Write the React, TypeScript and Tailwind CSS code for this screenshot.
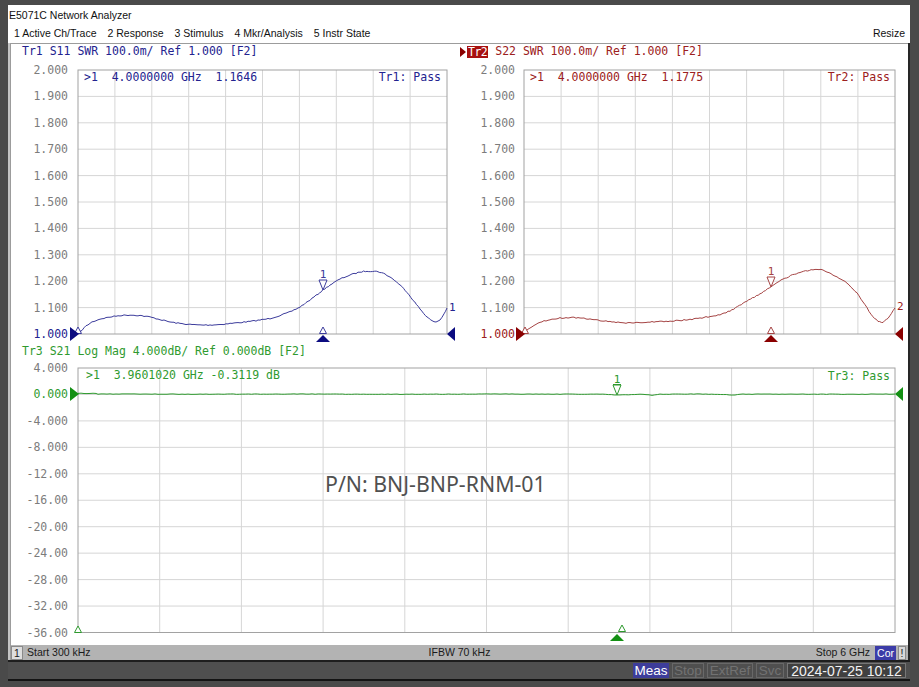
import React from "react";

type P = [number, number];

function trace(pts: P[], step: number, amp: number, seed: number): string {
  let s = seed;
  const rnd = () => {
    s = (s * 16807) % 2147483647;
    return s / 2147483647 - 0.5;
  };
  const out: string[] = [];
  for (let i = 0; i < pts.length - 1; i++) {
    const [x0, y0] = pts[i];
    const [x1, y1] = pts[i + 1];
    const n = Math.max(1, Math.round((x1 - x0) / step));
    for (let k = 0; k < n; k++) {
      const t = k / n;
      const x = x0 + (x1 - x0) * t;
      const y = y0 + (y1 - y0) * t + (i === 0 && k === 0 ? 0 : rnd() * amp);
      out.push(`${x.toFixed(1)},${y.toFixed(2)}`);
    }
  }
  const l = pts[pts.length - 1];
  out.push(`${l[0]},${l[1]}`);
  return out.join(" ");
}

const MONO = "DejaVu Sans Mono, monospace";
const GRAY = "#7c7c7c";

const tr1: P[] = [
  [78, 334], [82, 330], [86, 326], [92, 322], [100, 319], [110, 317], [120, 315.5], [130, 315], [140, 315.5],
  [150, 317], [160, 319.5], [170, 322], [180, 323.5], [190, 324.5], [200, 325], [210, 325], [220, 324.5],
  [230, 323.5], [240, 322.5], [250, 321.5], [260, 320], [270, 318.5], [280, 315.5], [290, 312], [300, 307],
  [310, 300], [318, 294], [323, 290], [330, 285], [340, 279], [350, 275], [360, 272], [367, 271], [378, 271.5],
  [385, 274], [393, 279], [400, 285], [407, 292], [413, 300], [420, 309], [427, 317], [432, 321], [436, 322],
  [440, 320], [444, 314], [447, 308],
];

const tr2: P[] = [
  [524, 334], [528, 329], [534, 325], [540, 322], [550, 319.5], [560, 318], [570, 317.5], [580, 318], [590, 319],
  [600, 320.5], [610, 321.5], [620, 322.5], [630, 323], [640, 322.5], [650, 322], [660, 321.5], [670, 321],
  [680, 320.5], [690, 319.5], [700, 318], [710, 316.5], [720, 314.5], [730, 311], [745, 302], [760, 294],
  [771, 287], [783, 279], [800, 272], [813, 269.5], [823, 270], [833, 275], [847, 283], [857, 293], [867, 308],
  [873, 317], [878, 321], [883, 322.5], [888, 318], [895, 308],
];

const tr3: P[] = [
  [78, 393.4], [96, 393.4], [98, 394], [200, 394.2], [300, 394], [400, 394.3], [500, 394], [560, 394.2],
  [600, 394], [617, 395], [640, 394.3], [652, 395.2], [660, 394.2], [700, 394], [735, 395], [740, 394.2],
  [800, 394.1], [850, 394.3], [895, 394],
];

function Grid({ x0, x1, y0, y1, nx, ny }: { x0: number; x1: number; y0: number; y1: number; nx: number; ny: number }) {
  const lines: React.ReactNode[] = [];
  for (let i = 1; i < nx; i++) {
    const x = x0 + ((x1 - x0) * i) / nx;
    lines.push(<line key={"v" + i} x1={x} x2={x} y1={y0} y2={y1} stroke="#d6d6d6" strokeWidth={1} />);
  }
  for (let i = 1; i < ny; i++) {
    const y = y0 + ((y1 - y0) * i) / ny;
    lines.push(<line key={"h" + i} x1={x0} x2={x1} y1={y} y2={y} stroke="#d6d6d6" strokeWidth={1} />);
  }
  return (
    <g>
      {lines}
      <rect x={x0} y={y0} width={x1 - x0} height={y1 - y0} fill="none" stroke="#a2a2a2" strokeWidth={1} />
    </g>
  );
}

function Labels({ x, y0, y1, labels, refIdx, refColor }: { x: number; y0: number; y1: number; labels: string[]; refIdx: number; refColor: string }) {
  const n = labels.length - 1;
  return (
    <g fontFamily={MONO} fontSize={11.5}>
      {labels.map((l, i) => (
        <text
          key={l}
          x={x}
          y={y0 + ((y1 - y0) * i) / n + 4}
          textAnchor="end"
          fill={i === refIdx ? refColor : GRAY}
        >
          {l}
        </text>
      ))}
    </g>
  );
}

function TriRight({ x, y, c }: { x: number; y: number; c: string }) {
  return <polygon points={`${x - 8},${y - 7} ${x + 1},${y} ${x - 8},${y + 7}`} fill={c} />;
}
function TriLeft({ x, y, c }: { x: number; y: number; c: string }) {
  return <polygon points={`${x + 8},${y - 7} ${x},${y} ${x + 8},${y + 7}`} fill={c} />;
}
function TriUpFill({ x, y, c }: { x: number; y: number; c: string }) {
  return <polygon points={`${x - 7},${y + 7} ${x},${y} ${x + 7},${y + 7}`} fill={c} />;
}
function TriUpHollow({ x, y, c }: { x: number; y: number; c: string }) {
  return <polygon points={`${x - 3.5},${y + 6.5} ${x},${y} ${x + 3.5},${y + 6.5}`} fill="white" stroke={c} strokeWidth={1} />;
}
function Marker({ x, y, c }: { x: number; y: number; c: string }) {
  return (
    <g>
      <polygon points={`${x - 4},${y - 10} ${x + 4},${y - 10} ${x},${y}`} fill="white" fillOpacity={0.6} stroke={c} strokeWidth={1} />
      <text x={x} y={y - 12} textAnchor="middle" fontFamily={MONO} fontSize={11} fill={c}>
        1
      </text>
    </g>
  );
}

const NB = "\u00a0";

function Tr1Chart() {
  const c = "#23238f";
  const t = "#3c3c9c";
  const d = "#0c0c80";
  const labels = ["2.000", "1.900", "1.800", "1.700", "1.600", "1.500", "1.400", "1.300", "1.200", "1.100", "1.000"];
  return (
    <svg width={447} height={283} viewBox="11 60 447 283" className="block">
      <Labels x={68} y0={70} y1={334} labels={labels} refIdx={10} refColor={c} />
      <Grid x0={78} x1={447} y0={70} y1={334} nx={10} ny={10} />
      <text x={84} y={81} fontFamily={MONO} fontSize={11.5} fill={c}>
        {`>1${NB}${NB}4.0000000${NB}GHz${NB}${NB}1.1646`}
      </text>
      <text x={441} y={81} textAnchor="end" fontFamily={MONO} fontSize={11.5} fill={c}>
        Tr1:{NB}Pass
      </text>
      <polyline points={trace(tr1, 2, 1.1, 7)} fill="none" stroke={t} strokeWidth={1} />
      <Marker x={323} y={290} c={t} />
      <text x={449} y={311} fontFamily={MONO} fontSize={11} fill={c}>
        1
      </text>
      <TriUpHollow x={78} y={327} c={t} />
      <TriUpHollow x={323} y={327} c={t} />
      <TriRight x={78} y={334} c={d} />
      <TriLeft x={447} y={334} c={d} />
      <TriUpFill x={323} y={335} c={d} />
    </svg>
  );
}

function Tr2Chart() {
  const c = "#9c2020";
  const t = "#a54444";
  const d = "#8a0000";
  const labels = ["2.000", "1.900", "1.800", "1.700", "1.600", "1.500", "1.400", "1.300", "1.200", "1.100", "1.000"];
  return (
    <svg width={450} height={283} viewBox="458 60 450 283" className="block">
      <Labels x={515} y0={70} y1={334} labels={labels} refIdx={10} refColor={c} />
      <Grid x0={524} x1={895} y0={70} y1={334} nx={10} ny={10} />
      <text x={530} y={81} fontFamily={MONO} fontSize={11.5} fill={c}>
        {`>1${NB}${NB}4.0000000${NB}GHz${NB}${NB}1.1775`}
      </text>
      <text x={890} y={81} textAnchor="end" fontFamily={MONO} fontSize={11.5} fill={c}>
        Tr2:{NB}Pass
      </text>
      <polyline points={trace(tr2, 2, 1.1, 13)} fill="none" stroke={t} strokeWidth={1} />
      <Marker x={771} y={287} c={t} />
      <text x={897} y={310} fontFamily={MONO} fontSize={11} fill={c}>
        2
      </text>
      <TriUpHollow x={525} y={327} c={t} />
      <TriUpHollow x={771} y={327} c={t} />
      <TriRight x={524} y={334} c={d} />
      <TriLeft x={895} y={334} c={d} />
      <TriUpFill x={771} y={335} c={d} />
    </svg>
  );
}

function Tr3Chart() {
  const c = "#2f9a2f";
  const t = "#2e9a2e";
  const d = "#149014";
  const labels = ["4.000", "0.000", "-4.000", "-8.000", "-12.00", "-16.00", "-20.00", "-24.00", "-28.00", "-32.00", "-36.00"];
  return (
    <svg width={897} height={285} viewBox="11 360 897 285" className="block">
      <Labels x={68} y0={368} y1={632.5} labels={labels} refIdx={1} refColor={c} />
      <Grid x0={78} x1={895} y0={368} y1={632.5} nx={10} ny={10} />
      <text x={86} y={379} fontFamily={MONO} fontSize={11.5} fill={c}>
        {`>1${NB}${NB}3.9601020${NB}GHz${NB}-0.3119${NB}dB`}
      </text>
      <text x={890} y={380} textAnchor="end" fontFamily={MONO} fontSize={11.5} fill={c}>
        Tr3:{NB}Pass
      </text>
      <text x={325} y={492} fontFamily="Noto Sans, Open Sans, sans-serif" fontSize={21.3} fill="#505050">
        P/N: BNJ-BNP-RNM-01
      </text>
      <polyline points={trace(tr3, 3, 0.45, 21)} fill="none" stroke={t} strokeWidth={1} />
      <Marker x={617} y={395} c={t} />
      <line x1={613} x2={621} y1={384.5} y2={384.5} stroke={t} strokeWidth={1} />
      <TriUpHollow x={78} y={626} c={t} />
      <TriUpHollow x={622} y={625} c={t} />
      <TriRight x={78} y={394} c={d} />
      <TriLeft x={895} y={394} c={d} />
      <TriUpFill x={617} y={634} c={d} />
    </svg>
  );
}

export default function App() {
  return (
    <div className="w-[919px] h-[687px] bg-[#4a4a4a] flex flex-col pt-[5px] pl-[8px] pr-[9px] overflow-hidden font-['Liberation_Sans',sans-serif]">
      {/* window title + menu */}
      <div className="bg-white h-[38px] flex flex-col text-[10.5px] text-[#111]">
        <div className="h-[19px] flex items-center pl-[1px] pt-[3px]">E5071C Network Analyzer</div>
        <div className="h-[19px] flex items-center pl-[6px] gap-[11px]">
          <span>1 Active Ch/Trace</span>
          <span>2 Response</span>
          <span>3 Stimulus</span>
          <span>4 Mkr/Analysis</span>
          <span>5 Instr State</span>
          <span className="ml-auto pr-[5px]">Resize</span>
        </div>
      </div>

      {/* instrument screen */}
      <div className="h-[617px] flex flex-col bg-white border-l-2 border-l-[#c4c4c4] border-r-2 border-r-[#262626]">
        <div className="flex-1 flex flex-col border-t border-l border-[#9c9c9c]">
          <div className="h-[299px] flex">
            <div className="w-[447px] flex flex-col">
              <div className="h-[16px] flex items-center pl-[11px] font-['DejaVu_Sans_Mono',monospace] text-[11.5px] text-[#23238f] whitespace-pre">
                Tr1 S11 SWR 100.0m/ Ref 1.000 [F2]
              </div>
              <Tr1Chart />
            </div>
            <div className="flex-1 flex flex-col">
              <div className="h-[16px] flex items-center pl-[2px] font-['DejaVu_Sans_Mono',monospace] text-[11.5px] text-[#9c2020] whitespace-pre">
                <svg width="6" height="10" viewBox="0 0 6 10" className="mr-[1px]">
                  <polygon points="0,0 6,5 0,10" fill="#8a0000" />
                </svg>
                <span className="bg-[#a81010] text-white leading-[12px] px-[1px] tracking-[-0.5px]">Tr2</span>
                <span> S22 SWR 100.0m/ Ref 1.000 [F2]</span>
              </div>
              <Tr2Chart />
            </div>
          </div>
          <div className="h-[302px] flex flex-col">
            <div className="h-[17px] flex items-center pl-[11px] font-['DejaVu_Sans_Mono',monospace] text-[11.5px] text-[#2f9a2f] whitespace-pre">
              Tr3 S21 Log Mag 4.000dB/ Ref 0.000dB [F2]
            </div>
            <Tr3Chart />
          </div>
          {/* status bar */}
          <div className="h-[15px] bg-[#b3b3b3] grid grid-cols-[1fr_auto_1fr] items-center text-[10.5px] text-[#1a1a1a]">
            <div className="flex items-center h-full">
              <span className="h-[14px] w-[12px] bg-[#dedede] border border-[#8a8a8a] flex items-center justify-center leading-none">
                1
              </span>
              <span className="ml-[4px]">Start 300 kHz</span>
            </div>
            <div>IFBW 70 kHz</div>
            <div className="flex items-center justify-end h-full">
              <span>Stop 6 GHz</span>
              <span className="ml-[5px] h-[14px] px-[2px] bg-[#3c3ca8] text-white flex items-center leading-none">Cor</span>
              <span className="ml-[2px] mr-[2px] h-[14px] w-[8px] bg-[#d8d8d8] border border-[#8a8a8a] flex items-center justify-center leading-none">
                !
              </span>
            </div>
          </div>
        </div>
      </div>

      {/* bottom bar */}
      <div className="h-[21px] bg-[#4f4f4f] border-t-2 border-t-[#1e1e1e] border-b-2 border-b-[#141414] flex items-center justify-end pr-[4px] gap-[3px] text-[13.5px]">
        <span className="h-[15px] w-[36px] bg-[#3d3d9a] text-white flex items-center justify-center leading-none">Meas</span>
        <span className="h-[15px] w-[32px] border border-[#686868] text-[#727272] flex items-center justify-center leading-none">Stop</span>
        <span className="h-[15px] w-[46px] border border-[#686868] text-[#727272] flex items-center justify-center leading-none">ExtRef</span>
        <span className="h-[15px] w-[28px] border border-[#686868] text-[#727272] flex items-center justify-center leading-none">Svc</span>
        <span className="h-[15px] w-[119px] border border-[#777] bg-[#404040] text-[#f2f2f2] text-[14px] flex items-center justify-center leading-none">
          2024-07-25 10:12
        </span>
      </div>
    </div>
  );
}
